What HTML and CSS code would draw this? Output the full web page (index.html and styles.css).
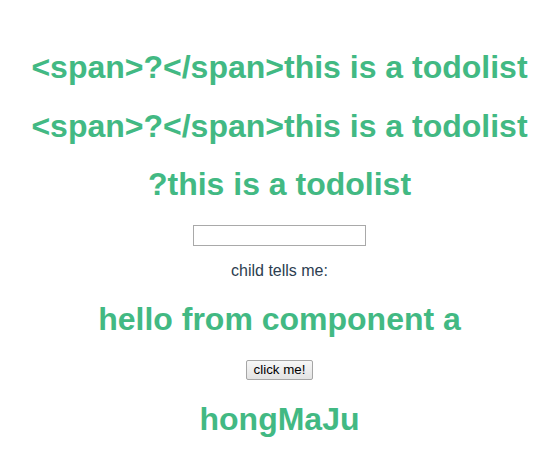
FILE: index.html
```html
<!DOCTYPE html>
<html>
<head>
<meta charset="utf-8">
<link rel="stylesheet" href="styles.css">
</head>
<body>
<div class="app">
  <h1 class="title">&lt;span&gt;?&lt;/span&gt;this is a todolist</h1>
  <h1 class="title">&lt;span&gt;?&lt;/span&gt;this is a todolist</h1>
  <h1 class="title"><span>?</span>this is a todolist</h1>
  <div class="field"><input class="text-input" type="text"></div>
  <p class="note">child tells me:</p>
  <h1 class="title">hello from component a</h1>
  <div class="field"><button class="btn" type="button">click me!</button></div>
  <h1 class="title">hongMaJu</h1>
</div>
</body>
</html>
```

FILE: styles.css
```css
html, body {
  margin: 0;
  padding: 0;
  background: #ffffff;
}
.app {
  padding: 28px 0 0 9px;
  text-align: center;
  font-family: "Liberation Sans", Arial, sans-serif;
  color: #2c3e50;
}
.title {
  font-size: 32px;
  font-weight: bold;
  color: #42b983;
  margin: 21.44px 0;
  line-height: 37px;
}
.field {
  line-height: 0;
}
.text-input {
  box-sizing: border-box;
  width: 173px;
  height: 21px;
  border: 1px solid #a9a9a9;
  padding: 1px 2px;
  margin: 0;
  font: 13.33px "Liberation Sans", Arial, sans-serif;
  background: #fff;
}
.note {
  font-size: 16px;
  margin: 16px 0;
  line-height: 18px;
}
.btn {
  box-sizing: border-box;
  height: 20px;
  padding: 0 7px;
  margin: 0;
  border: 1px solid #a6a6a6;
  border-radius: 2px;
  background: linear-gradient(#f7f7f7, #e3e3e3);
  font: 13.33px "Liberation Sans", Arial, sans-serif;
  color: #000;
}
```
